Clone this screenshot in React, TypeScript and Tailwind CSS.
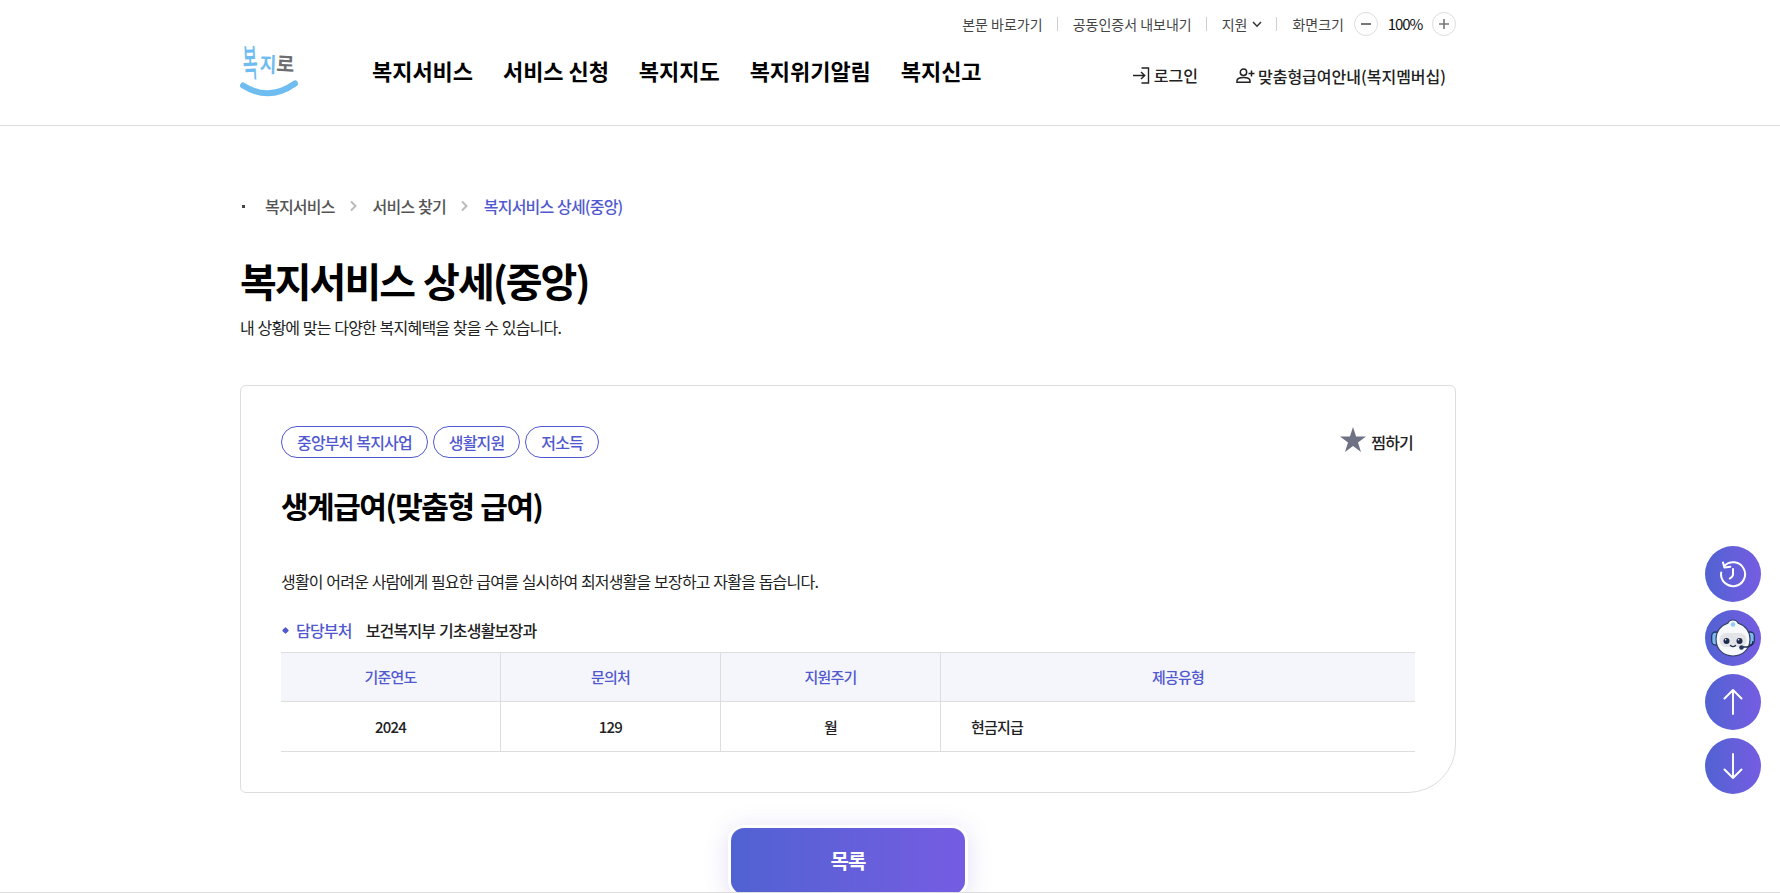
import React from 'react';

const NAV_ITEMS = ['복지서비스', '서비스 신청', '복지지도', '복지위기알림', '복지신고'];
const TAGS = ['중앙부처 복지사업', '생활지원', '저소득'];

const Logo: React.FC = () => (
  <svg width="60" height="52" viewBox="0 0 60 52" className="overflow-visible" aria-label="복지로">
    <g fontFamily="'Noto Sans CJK KR', sans-serif" fontWeight="700">
      <text fill="#6fbcf0" fontSize="18" fontWeight="500" transform="translate(3.5 32) rotate(-3) scale(0.9 2.1)">
        복
      </text>
      <text fill="#6fbcf0" fontSize="19" transform="translate(19.5 27) rotate(2) scale(0.95 1.1)">
        지
      </text>
      <text fill="#6c6e72" fontSize="19" transform="translate(36 26) rotate(3) scale(1.03 1.06)">
        로
      </text>
    </g>
    <path d="M3 40.5Q29 57 55 38.5" fill="none" stroke="#6fbcf0" strokeWidth="6" strokeLinecap="round" />
  </svg>
);

const LoginIcon: React.FC = () => (
  <svg width="17" height="17" viewBox="0 0 17 17" fill="none" stroke="#222" strokeWidth="1.4">
    <path d="M8.5 1h7v15h-7M0 8.5h11.5M8 5l3.7 3.5L8 12" />
  </svg>
);

const MemberIcon: React.FC = () => (
  <svg width="19" height="16" viewBox="0 0 19 16" fill="none" stroke="#222" strokeWidth="1.5">
    <circle cx="7.5" cy="4.2" r="3.2" />
    <path d="M1 14.2v-1.4c0-2 2.6-3.3 6.5-3.3s6.5 1.3 6.5 3.3v1.4zM15.5 2.5v6M12.5 5.5h6" />
  </svg>
);

const Chevron: React.FC = () => (
  <svg width="8" height="12" viewBox="0 0 8 12" fill="none" stroke="#bbb" strokeWidth="2">
    <path d="M1 1.5l4.5 4.5l-4.5 4.5" />
  </svg>
);

const HistoryIcon: React.FC = () => (
  <svg width="28" height="28" viewBox="0 0 28 28" fill="none" stroke="#fff" strokeWidth="2" strokeLinecap="round" strokeLinejoin="round">
    <path d="M2.2 12.5A12 12 0 1 0 5.5 5.8" />
    <path d="M4 2.5l1.4 5l6-.8M14 9v5.5q0 2-3.2 4" />
  </svg>
);

const BotIcon: React.FC = () => (
  <svg width="44" height="38" viewBox="0 0 44 38">
    <rect x=".7" y="13" width="8" height="13" rx="4" fill="#7db9f2" stroke="#26375f" strokeWidth="1.3" />
    <rect x="35.3" y="13" width="8" height="13" rx="4" fill="#7db9f2" stroke="#26375f" strokeWidth="1.3" />
    <path
      d="M22 1c3 0 4.5 1.3 5.2 3.3C34.5 6.5 39 12.5 39 20c0 10.5-7.5 17-17 17S5 30.5 5 20C5 12.5 9.5 6.5 16.8 4.3C17.5 2.3 19 1 22 1z"
      fill="#f7f8fa"
      stroke="#34406a"
      strokeWidth="1.2"
    />
    <rect x="8.5" y="14" width="27" height="14" rx="6.5" fill="#e3e4e8" />
    <circle cx="22" cy="5.5" r="2.2" fill="#8ecbf7" />
    <circle cx="15.5" cy="22" r="3" fill="#202a4c" />
    <circle cx="28.5" cy="22" r="3" fill="#202a4c" />
    <circle cx="14.6" cy="20.8" r=".8" fill="#fff" />
    <circle cx="27.6" cy="20.8" r=".8" fill="#fff" />
    <path d="M19.5 26.5q2.5 2.2 5 0" fill="none" stroke="#202a4c" strokeWidth="1.3" strokeLinecap="round" />
    <path d="M42 22q0 5-6 6h-5" fill="none" stroke="#202a4c" strokeWidth="1.4" />
    <circle cx="30.5" cy="28.5" r="2.3" fill="#26375f" />
  </svg>
);

const ArrowIcon: React.FC<{ down?: boolean }> = ({ down }) => (
  <svg
    width="20"
    height="26"
    viewBox="0 0 20 26"
    fill="none"
    stroke="#fff"
    strokeWidth="1.9"
    strokeLinecap="round"
    strokeLinejoin="round"
    className={down ? 'rotate-180' : ''}>
    <path d="M10 25V1M1.5 9.5L10 1l8.5 8.5" />
  </svg>
);

const RoundButton: React.FC<{ label: string; children: React.ReactNode }> = ({ label, children }) => (
  <button
    type="button"
    aria-label={label}
    className="flex size-14 items-center justify-center rounded-full bg-linear-to-r from-[#5062d2] to-[#755ce2]">
    {children}
  </button>
);

const Header: React.FC = () => (
  <header className="h-[126px] border-b border-[#ddd]">
    <div className="ml-[240px] flex w-[1216px] flex-col">
      <div className="flex h-12 items-center justify-end text-sm text-[#444]">
        <a href="#content">본문 바로가기</a>
        <i className="mr-[15px] ml-3.5 h-3.5 w-px bg-[#d0d0d0]" />
        <a href="#cert">공동인증서 내보내기</a>
        <i className="mr-[15px] ml-3.5 h-3.5 w-px bg-[#d0d0d0]" />
        <button type="button" className="flex items-center gap-[5px]">
          지원
          <svg width="10" height="7" viewBox="0 0 10 7" fill="none" stroke="#333" strokeWidth="1.5">
            <path d="M1 1l4 4.2l4-4.2" />
          </svg>
        </button>
        <i className="mr-[15px] ml-3.5 h-3.5 w-px bg-[#d0d0d0]" />
        <span>화면크기</span>
        <button
          type="button"
          aria-label="축소"
          className="ml-2.5 flex size-6 items-center justify-center rounded-full border border-[#ddd]">
          <i className="h-0.5 w-2.5 bg-[#777]" />
        </button>
        <span className="w-[54px] text-center text-[15px] tracking-[-0.07em] text-[#111]">100%</span>
        <button
          type="button"
          aria-label="확대"
          className="flex size-6 items-center justify-center rounded-full border border-[#ddd]">
          <svg width="10" height="10" viewBox="0 0 10 10" stroke="#777" strokeWidth="1.6">
            <path d="M5 0v10M0 5h10" />
          </svg>
        </button>
      </div>
      <div className="flex h-[50px] items-center">
        <a href="/" className="-mt-1 w-[132px]">
          <Logo />
        </a>
        <nav className="-mt-1.5 flex gap-[30px] text-[22px] font-bold tracking-[-0.05px] text-black">
          {NAV_ITEMS.map((item) => (
            <a key={item} href="#menu">
              {item}
            </a>
          ))}
        </nav>
        <div className="mt-1.5 ml-auto flex items-center gap-[37px] pr-2.5 text-base font-medium text-[#222]">
          <a href="#login" className="-mt-0.5 flex items-center gap-1">
            <LoginIcon />
            <span className="mr-px">로그인</span>
          </a>
          <a href="#member" className="flex items-center gap-[3px]">
            <MemberIcon />
            맞춤형급여안내(복지멤버십)
          </a>
        </div>
      </div>
    </div>
  </header>
);

const Breadcrumb: React.FC = () => (
  <nav className="flex h-6 items-center font-medium text-[#555]">
    <i className="mr-5 ml-0.5 size-[3px] bg-[#444]" />
    <span>복지서비스</span>
    <span className="flex w-[38px] justify-center">
      <Chevron />
    </span>
    <span>서비스 찾기</span>
    <span className="flex w-[38px] justify-center">
      <Chevron />
    </span>
    <span className="text-[#5159d0]">복지서비스 상세(중앙)</span>
  </nav>
);

const ServiceTable: React.FC = () => (
  <table className="mt-2.5 w-full table-fixed border-separate border-spacing-0 text-center text-[15px] font-medium">
    <colgroup>
      <col className="w-[220px]" />
      <col className="w-[220px]" />
      <col className="w-[220px]" />
      <col />
    </colgroup>
    <thead>
      <tr className="h-[50px] bg-[#f5f6fb] text-[#5159d0]">
        <th className="border-y border-r border-[#ddd] pt-px font-medium">기준연도</th>
        <th className="border-y border-r border-[#ddd] pt-px font-medium">문의처</th>
        <th className="border-y border-r border-[#ddd] pt-px font-medium">지원주기</th>
        <th className="border-y border-[#ddd] pt-px font-medium">제공유형</th>
      </tr>
    </thead>
    <tbody>
      <tr className="h-[50px]">
        <td className="border-r border-b border-[#ddd] pt-0.5">2024</td>
        <td className="border-r border-b border-[#ddd] pt-0.5">129</td>
        <td className="border-r border-b border-[#ddd] pt-0.5">월</td>
        <td className="border-b border-[#ddd] pt-0.5 pl-[30px] text-left">현금지급</td>
      </tr>
    </tbody>
  </table>
);

const ServiceCard: React.FC = () => (
  <section className="mt-[46px] h-[408px] rounded-md rounded-br-[48px] border border-[#ddd] px-10 pt-10">
    <div className="flex h-8 items-center justify-between">
      <ul className="flex gap-[4.8px]">
        {TAGS.map((tag) => (
          <li
            key={tag}
            className="flex h-8 items-center rounded-full border border-[#5159d0] px-[15px] font-medium text-[#5159d0]">
            {tag}
          </li>
        ))}
      </ul>
      <button type="button" className="flex items-center gap-[5px] pr-0.5 font-medium">
        <svg width="26" height="26" viewBox="0 0 26 26" className="-mt-1">
          <path
            d="M13 0l3.1 9.6H26l-8 5.9l3 9.5l-8-5.9L5 25l3-9.5L0 9.6h9.9z"
            fill="#6f7285"
          />
        </svg>
        찜하기
      </button>
    </div>
    <h2 className="mt-[25px] text-[30px] leading-[44px] font-bold tracking-[-0.05em] text-black [word-spacing:0.05em]">
      생계급여(맞춤형 급여)
    </h2>
    <p className="mt-[42px] leading-6">
      생활이 어려운 사람에게 필요한 급여를 실시하여 최저생활을 보장하고 자활을 돕습니다.
    </p>
    <dl className="mt-[25px] flex h-6 items-center font-medium">
      <i className="mr-2 ml-0.5 size-[5px] rotate-45 rounded-[1px] bg-[#5159d0]" />
      <dt className="mr-3.5 text-[#5159d0]">담당부처</dt>
      <dd>보건복지부 기초생활보장과</dd>
    </dl>
    <ServiceTable />
  </section>
);

const App: React.FC = () => {
  return (
    <div className="relative h-[893px] overflow-hidden bg-white font-['Noto_Sans_CJK_KR',sans-serif] text-[#222]">
      <Header />
      <main
        id="content"
        className="ml-[240px] w-[1216px] pt-[68px] tracking-[-0.05em] [word-spacing:0.05em]">
        <Breadcrumb />
        <h1 className="mt-[33px] text-[40px] leading-[58px] font-bold tracking-[-0.05em] text-black [word-spacing:0.05em]">
          복지서비스 상세(중앙)
        </h1>
        <p className="mt-1.5 leading-6">내 상황에 맞는 다양한 복지혜택을 찾을 수 있습니다.</p>
        <ServiceCard />
        <button
          type="button"
          className="mx-auto mt-8 block h-[72px] w-60 rounded-2xl bg-white p-[3px] shadow-[0_4px_24px_rgba(90,70,210,0.18)]">
          <span className="flex h-full items-center justify-center rounded-[13px] bg-linear-to-r from-[#5062d2] to-[#755ce2] text-xl font-bold text-white">
            목록
          </span>
        </button>
      </main>

      {/* Quick menu floats over the page */}
      <aside className="absolute top-[546px] right-[19px] flex flex-col gap-2">
        <RoundButton label="최근 본 서비스">
          <HistoryIcon />
        </RoundButton>
        <RoundButton label="챗봇">
          <BotIcon />
        </RoundButton>
        <RoundButton label="맨 위로">
          <ArrowIcon />
        </RoundButton>
        <RoundButton label="맨 아래로">
          <ArrowIcon down />
        </RoundButton>
      </aside>
      <div className="absolute inset-x-0 bottom-0 h-px bg-[#ddd]" />
    </div>
  );
};

export default App;
